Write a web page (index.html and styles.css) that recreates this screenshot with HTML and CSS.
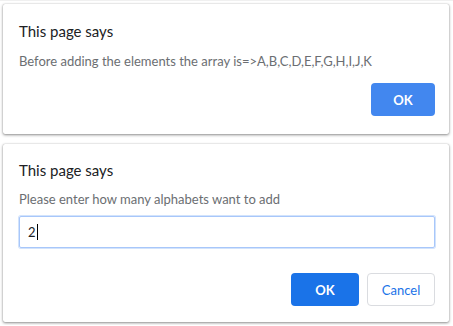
FILE: index.html
```html
<!DOCTYPE html>
<html lang="en">
<head>
    <meta charset="UTF-8">
    <title>This page says</title>
    <link rel="stylesheet" href="styles.css">
</head>
<body>
    <div class="backdrop">
        <div class="dialog alert">
            <div class="title">This page says</div>
            <div class="message">Before adding the elements the array is=&gt;A,B,C,D,E,F,G,H,I,J,K</div>
            <div class="buttons">
                <button class="btn primary idle">OK</button>
            </div>
        </div>

        <div class="dialog prompt">
            <div class="title">This page says</div>
            <div class="message">Please enter how many alphabets want to add</div>
            <div class="field"><span class="value">2</span><span class="caret"></span></div>
            <div class="buttons">
                <button class="btn primary">OK</button>
                <button class="btn secondary">Cancel</button>
            </div>
        </div>
    </div>
</body>
</html>
```

FILE: styles.css
```css
body {
    margin: 0;
    background: #ffffff;
    font-family: Lato, "Noto Sans", sans-serif;
}
.backdrop {
    padding: 3px 4px 3px 3px;
    display: flex;
    flex-direction: column;
    gap: 10px;
    border-top: 1px solid #f0f0f0;
}
.dialog {
    background: #fff;
    border-radius: 2px;
    box-shadow: 0 1px 3px rgba(0,0,0,0.45), 0 0 1px rgba(0,0,0,0.3);
    padding: 17px 14px 15px 16px;
}
.alert {
    height: 98px;
}
.prompt {
    padding-top: 16px;
    padding-bottom: 16px;
}
.title {
    font-size: 15px;
    line-height: 20px;
    color: #202124;
}
.message {
    margin-top: 11px;
    font-size: 13px;
    line-height: 18px;
    color: #6b6e72;
}
.prompt .message {
    margin-top: 10px;
}
.field {
    margin-top: 8px;
    height: 30px;
    border: 1px solid #a8c7fa;
    border-radius: 2px;
    box-shadow: 0 0 0 1px #d2e3fc;
    display: flex;
    align-items: center;
    padding-left: 8px;
    font-size: 13px;
    color: #202124;
}
.caret {
    display: inline-block;
    width: 1px;
    height: 16px;
    background: #000;
    margin-left: 1px;
}
.buttons {
    display: flex;
    justify-content: flex-end;
    gap: 8px;
}
.alert .buttons {
    margin-top: 13px;
}
.prompt .buttons {
    margin-top: 25px;
}
.btn {
    font-family: inherit;
    font-size: 13px;
    font-weight: bold;
    height: 33px;
    width: 68px;
    border-radius: 4px;
    border: 1px solid transparent;
    cursor: pointer;
}
.primary {
    background-color: #1a73e8;
    color: #fff;
}
.primary.idle {
    background-color: #4287ef;
    width: 64px;
}
.secondary {
    background-color: #fff;
    border-color: #dadce0;
    color: #1a73e8;
    font-weight: normal;
}
```
